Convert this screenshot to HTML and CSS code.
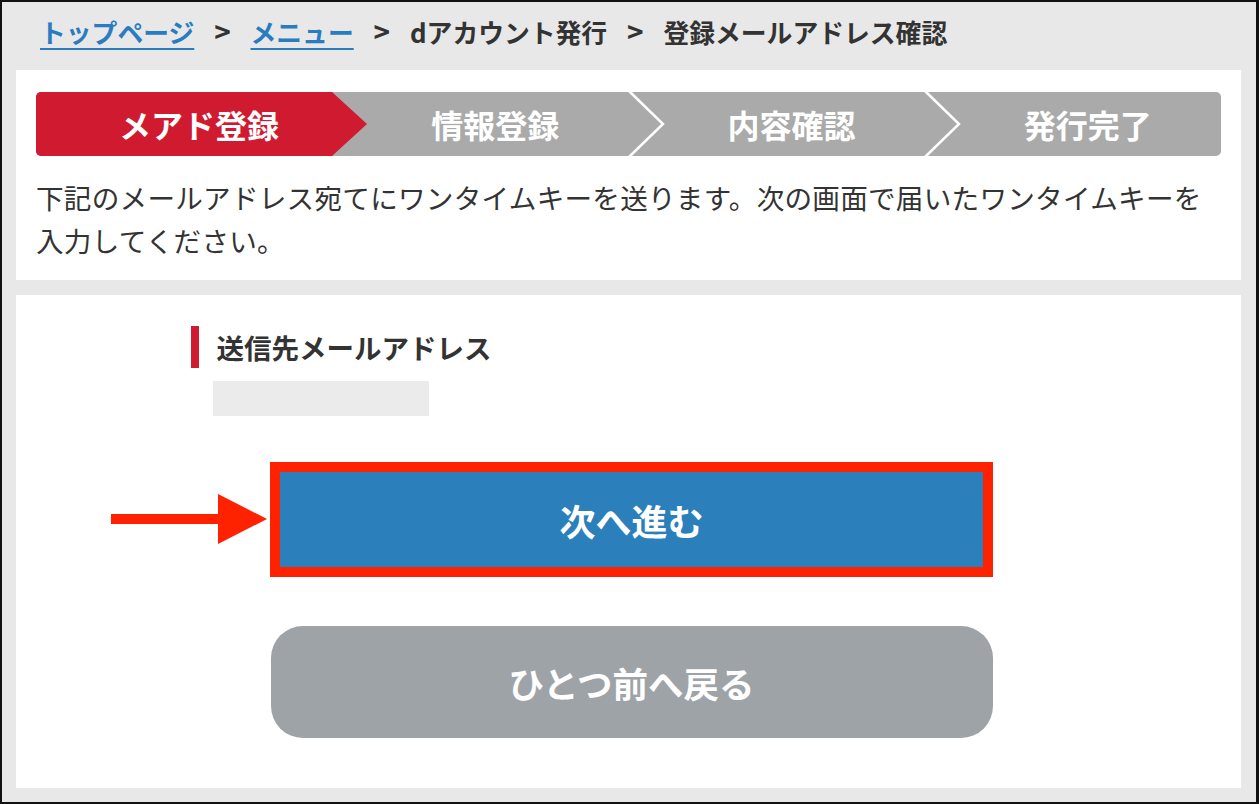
FILE: index.html
```html
<!DOCTYPE html>
<html lang="ja">
  <head>
    <meta charset="UTF-8" />
    <meta name="viewport" content="width=device-width, initial-scale=1.0" />
    <title>登録メールアドレス確認</title>
    <link rel="stylesheet" href="styles.css">
  </head>
  <body>
    <div class="frame">
      <nav class="breadcrumb">
        <a href="#">トップページ</a>
        <span class="sep">&gt;</span>
        <a href="#">メニュー</a>
        <span class="sep">&gt;</span>
        <span>dアカウント発行</span>
        <span class="sep">&gt;</span>
        <span>登録メールアドレス確認</span>
      </nav>

      <section class="panel panel-intro">
        <ol class="steps">
          <li class="step is-current">
            メアド登録
            <svg class="step-mark" viewBox="0 0 37 64" aria-hidden="true">
              <polygon points="0,0 1,0 36,32 1,64 0,64" fill="#d01a30" />
            </svg>
          </li>
          <li class="step">
            情報登録
            <svg class="step-mark" viewBox="0 0 37 64" aria-hidden="true">
              <polyline points="1,-1 35,32 1,65" fill="none" stroke="#fff" stroke-width="2.5" />
            </svg>
          </li>
          <li class="step">
            内容確認
            <svg class="step-mark" viewBox="0 0 37 64" aria-hidden="true">
              <polyline points="1,-1 35,32 1,65" fill="none" stroke="#fff" stroke-width="2.5" />
            </svg>
          </li>
          <li class="step">発行完了</li>
        </ol>
        <p class="lead">
          下記のメールアドレス宛てにワンタイムキーを送ります。次の画面で届いたワンタイムキーを入力してください。
        </p>
      </section>

      <section class="panel panel-form">
        <div class="form-body">
          <h2 class="field-title">送信先メールアドレス</h2>
          <div class="field-value"></div>
        </div>

        <div class="actions">
          <div class="highlight">
            <svg class="pointer" viewBox="0 0 157 50" aria-hidden="true">
              <rect x="0" y="20" width="109" height="10" fill="#ff2200" />
              <polygon points="107,0 156,25 107,50" fill="#ff2200" />
            </svg>
            <button class="btn btn-next">次へ進む</button>
          </div>
          <button class="btn btn-back">ひとつ前へ戻る</button>
        </div>
      </section>
    </div>
  </body>
</html>
```

FILE: styles.css
```css
* {
  box-sizing: border-box;
}
body {
  margin: 0;
  font-family: "Noto Sans CJK JP", "Noto Sans", sans-serif;
  color: #333;
}
.frame {
  width: 1259px;
  height: 804px;
  border: 2px solid #111;
  border-right-width: 3px;
  background-color: #e8e8e8;
  padding: 0 15px 0 14px;
  overflow: hidden;
}
.breadcrumb {
  padding: 10px 24px 19px;
  font-size: 25.8px;
  font-weight: 700;
  line-height: 38px;
  white-space: nowrap;
  color: #333;
}
.breadcrumb a {
  color: #2a7cc0;
  text-decoration: underline;
  text-decoration-thickness: 2px;
  text-underline-offset: 5px;
}
.breadcrumb .sep {
  margin: 0 14px;
  font-size: 28px;
}
.panel {
  background-color: #fff;
}
.panel-intro {
  height: 210px;
  padding: 22px 20px 0;
}
.steps {
  list-style: none;
  margin: 0;
  padding: 0;
  display: flex;
  height: 64px;
  background-color: #aaa;
  border-radius: 5px;
}
.step {
  position: relative;
  flex: 1;
  display: flex;
  align-items: center;
  justify-content: center;
  padding-left: 30px;
  font-size: 32px;
  font-weight: 700;
  color: #fff;
}
.step.is-current {
  background-color: #d01a30;
  border-radius: 5px 0 0 5px;
}
.step-mark {
  position: absolute;
  top: 0;
  left: calc(100% - 1px);
  width: 37px;
  height: 64px;
  z-index: 1;
  overflow: visible;
}
.lead {
  margin: 20px 0 0;
  font-size: 27.6px;
  letter-spacing: 0.25px;
  line-height: 43px;
  color: #333;
}
.panel-form {
  margin-top: 15px;
  height: 493px;
  padding: 31px 0 0;
}
.form-body {
  width: 876px;
  margin: 0 auto;
}
.field-title {
  margin: 0;
  height: 42px;
  border-left: 8px solid #d01a30;
  padding-left: 18px;
  font-size: 27.5px;
  font-weight: 700;
  line-height: 42px;
  color: #333;
}
.field-value {
  margin: 13px 0 0 22px;
  width: 216px;
  height: 35px;
  background-color: #ebebeb;
}
.actions {
  display: flex;
  flex-direction: column;
  align-items: center;
  gap: 49px;
  margin-top: 46px;
  padding-left: 6px;
}
.highlight {
  position: relative;
  width: 723px;
  border: 10px solid #ff2200;
}
.pointer {
  position: absolute;
  left: -169px;
  top: 22px;
  width: 157px;
  height: 50px;
}
.btn {
  display: block;
  border: none;
  font-family: inherit;
  font-weight: 700;
  color: #fff;
  cursor: pointer;
}
.btn-next {
  width: 100%;
  height: 95px;
  background-color: #2b7fba;
  font-size: 36px;
}
.btn-back {
  width: 722px;
  height: 112px;
  border-radius: 32px;
  background-color: #9ea3a7;
  font-size: 35.5px;
}
```
